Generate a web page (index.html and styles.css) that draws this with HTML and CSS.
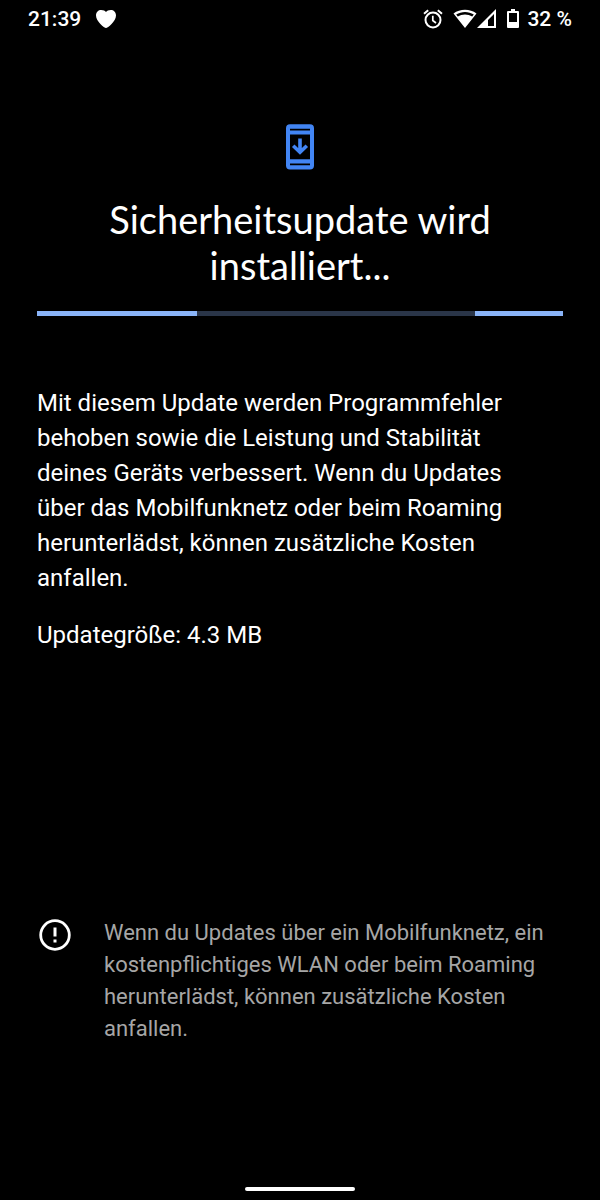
FILE: index.html
```html
<!DOCTYPE html>
<html lang="de">
<head>
  <meta charset="UTF-8">
  <meta name="viewport" content="width=device-width, initial-scale=1">
  <title>Systemupdate</title>
  <link rel="stylesheet" href="styles.css">
</head>
<body>
  <header class="status_bar">
    <span>21:39</span>
    <svg class="heart" width="20" height="18" viewBox="0 0 20 18" aria-hidden="true">
      <path fill="#fff" d="M10 18C8.500 18 0 11.500 0 5.500C0 2 2.400 0 5.200 0C7.400 0 9.200 0.700 10 2C10.800 0.700 12.600 0 14.800 0C17.600 0 20 2 20 5.500C20 11.500 11.500 18 10 18Z"/>
    </svg>
    <div class="status_icons">
      <svg width="20" height="20" viewBox="0 0 20 20" fill="none" stroke="#fff" stroke-width="2" aria-hidden="true">
        <circle cx="10" cy="11" r="7.500"/>
        <path d="M9.800 6.800V11.500L13 14" stroke-width="1.700"/>
        <path d="M1 4.800L5.200 1.200M19 4.800L14.800 1.200"/>
      </svg>
      <svg class="wifi" width="24" height="20" viewBox="0 0 24 20" aria-hidden="true">
        <path fill="#fff" fill-rule="evenodd" d="M0.500 4.500C7 -0.500 17 -0.500 23.500 4.500L12 19ZM3.200 5.600L4.800 7.600C9 4.800 15 4.800 19.200 7.600L20.800 5.600C15.500 2 8.500 2 3.200 5.600Z"/>
      </svg>
      <svg class="signal" width="20" height="20" viewBox="0 0 20 20" aria-hidden="true">
        <path fill="#fff" fill-rule="evenodd" d="M0 19L19 0V19ZM11 11V17H17V5Z"/>
      </svg>
      <svg class="battery" width="12" height="20" viewBox="0 0 12 20" aria-hidden="true">
        <path fill="#fff" fill-rule="evenodd" d="M4 0H8V2H11Q12 2 12 3V18Q12 19 11 19H1Q0 19 0 18V3Q0 2 1 2H4ZM2 4V13H10V4Z"/>
      </svg>
      <span>32 %</span>
    </div>
  </header>

  <main class="main">
    <svg class="update_icon" width="30" height="46" viewBox="0 0 30 46" aria-hidden="true">
      <path fill="#4285f4" fill-rule="evenodd" d="M5 0.300H25Q29 0.300 29 4.300V41.500Q29 45.500 25 45.500H5Q1 45.500 1 41.500V4.300Q1 0.300 5 0.300ZM5 4.800V6.500H25V4.800ZM5 10.500V35.300H25V10.500ZM5 39.500V41.300H25V39.500Z"/>
      <path fill="none" stroke="#4285f4" stroke-width="3.600" d="M15 14.500V28M8.200 21.800L15 28.200L21.800 21.800"/>
    </svg>
    <h1>Sicherheitsupdate wird installiert...</h1>
    <div class="progress" role="progressbar" aria-label="Installation">
      <div style="width: 30.4%"></div>
      <div style="width: 16.8%"></div>
    </div>
    <p>Mit diesem Update werden Programmfehler behoben sowie die Leistung und Stabilität deines Geräts verbessert. Wenn du Updates über das Mobilfunknetz oder beim Roaming herunterlädst, können zusätzliche Kosten anfallen.</p>
    <p>Updategröße: 4.3 MB</p>
  </main>

  <footer class="note">
    <svg class="note_icon" width="32" height="32" viewBox="0 0 32 32" aria-hidden="true">
      <circle cx="16" cy="16" r="14.300" fill="none" stroke="#fff" stroke-width="2.800"/>
      <path fill="#fff" d="M14.500 8.500H17.500V17.500H14.500ZM14.500 20.500H17.500V23.500H14.500Z"/>
    </svg>
    <p>Wenn du Updates über ein Mobilfunknetz, ein kostenpflichtiges WLAN oder beim Roaming herunterlädst, können zusätzliche Kosten anfallen.</p>
  </footer>
  <div class="nav_handle"></div>
</body>
</html>
```
FILE: styles.css
```css
* {
  box-sizing: border-box;
}

body {
  margin: 0;
  min-height: 100vh;
  display: flex;
  flex-direction: column;
  background-color: #000;
  color: #fff;
  font-family: Roboto, sans-serif;
}

h1, p {
  margin: 0;
}

svg {
  display: block;
  flex: none;
}

.status_bar {
  display: flex;
  align-items: center;
  height: 38px;
  padding: 0 28px;
  font-size: 21px;
  font-weight: 500;
}

.heart {
  margin-left: 15px;
}

.status_icons {
  display: flex;
  align-items: center;
  margin-left: auto;
}

.wifi {
  margin-left: 10px;
}

.battery {
  margin: 0 8px 0 10px;
}

.main {
  padding: 86px 37px 0;
}

.update_icon {
  margin: 0 auto 26px;
}

h1 {
  font-family: Lato, sans-serif;
  font-size: 38px;
  font-weight: 400;
  line-height: 46px;
  text-align: center;
}

.progress {
  display: flex;
  justify-content: space-between;
  height: 5px;
  margin: 23px 0 70px;
  background-color: #2a3548;
}

.progress > div {
  background-color: #8ab4f8;
}

.main p {
  margin-bottom: 22px;
  padding-right: 24px;
  font-size: 24px;
  line-height: 35px;
}

.note {
  display: flex;
  gap: 33px;
  margin-top: auto;
  padding: 0 37px 0 39px;
}

.note_icon {
  margin-top: 2px;
}

.note p {
  color: #a6a6a6;
  font-size: 22px;
  line-height: 32px;
}

/* gesture bar */
.nav_handle {
  width: 110px;
  height: 4px;
  margin: 142px auto 9px;
  border-radius: 2px;
  background-color: #fff;
}
```
